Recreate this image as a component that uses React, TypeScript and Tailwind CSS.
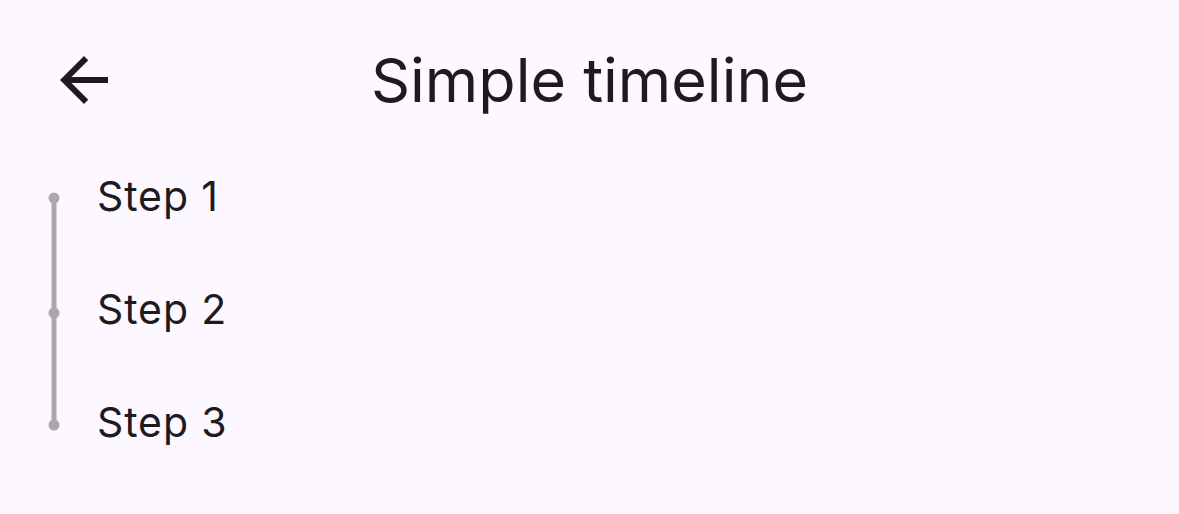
import React from "react";

export default function App() {
  const steps = ["Step 1", "Step 2", "Step 3"];
  return (
    <div
      className="w-[1179px] h-[514px] bg-[#fdf7ff] text-[#1d1b20] overflow-hidden"
      style={{ fontFamily: "Inter, Roboto, sans-serif" }}
    >
      <div className="grid grid-cols-[1fr_auto_1fr] items-center h-[160px]">
        <div className="pl-[48px] flex items-center">
          <svg width="72" height="72" viewBox="0 0 24 24" fill="#1d1b20">
            <path d="M20 11H7.83l5.59-5.59L12 4l-8 8 8 8 1.41-1.41L7.83 13H20v-2z" />
          </svg>
        </div>
        <div className="text-[61px] leading-[80px]">Simple timeline</div>
        <div />
      </div>
      <div className="flex pt-[12px]">
        <div className="w-[97px] relative">
          <svg width="97" height="300" className="absolute left-0 top-0">
            <line x1="54" y1="26" x2="54" y2="253" stroke="#aaa8ae" strokeWidth="5" />
            <circle cx="54" cy="26" r="5.5" fill="#aaa8ae" />
            <circle cx="54" cy="141" r="5.5" fill="#aaa8ae" />
            <circle cx="54" cy="253" r="5.5" fill="#aaa8ae" />
          </svg>
        </div>
        <div className="flex flex-col gap-[65px]">
          {steps.map((s) => (
            <div key={s} className="text-[41px] leading-[48px] tracking-[0.9px]">
              {s}
            </div>
          ))}
        </div>
      </div>
    </div>
  );
}
